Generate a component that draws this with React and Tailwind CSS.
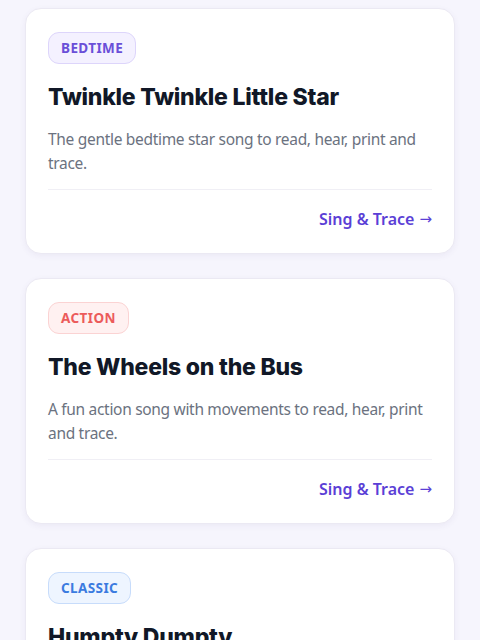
import React from "react";

const songs = [
  {
    tag: "BEDTIME",
    tagClass: "bg-[#f4f1ff] border-[#ddd5fb] text-[#6a4fd8]",
    title: "Twinkle Twinkle Little Star",
    text: "The gentle bedtime star song to read, hear, print and trace.",
  },
  {
    tag: "ACTION",
    tagClass: "bg-[#fff1f1] border-[#fbd3d3] text-[#ec5b5b]",
    title: "The Wheels on the Bus",
    text: "A fun action song with movements to read, hear, print and trace.",
  },
  {
    tag: "CLASSIC",
    tagClass: "bg-[#eef5ff] border-[#c7dcfb] text-[#3b7be0]",
    title: "Humpty Dumpty",
    text: "The classic wall-sitting rhyme to read, hear, print and trace.",
  },
];

function SongCard({ song }) {
  return (
    <div className="bg-white border border-[#ebe9f3] rounded-2xl shadow-[0_2px_6px_rgba(60,50,120,0.06)] px-[22px] pt-[23px] pb-[22px]">
      <span
        className={`inline-flex items-center h-8 px-3 rounded-[11px] border text-[13.5px] font-bold tracking-[0.03em] font-['Noto_Sans',sans-serif] ${song.tagClass}`}
      >
        {song.tag}
      </span>
      <h2 className="mt-[17px] text-[23px] leading-8 font-extrabold tracking-[-0.01em] text-[#111827] font-['Inter',sans-serif]">
        {song.title}
      </h2>
      <p className="mt-[14px] text-[15.5px] leading-[24px] tracking-[-0.02em] text-[#6b7280] font-['Noto_Sans',sans-serif]">
        {song.text}
      </p>
      <div className="mt-[14px] border-t border-[#f0eff5]" />
      <div className="flex justify-end pt-[17px]">
        <a className="flex items-center gap-[5px] text-[16px] leading-6 font-semibold text-[#5b3fd6] font-['Noto_Sans',sans-serif]">
          Sing &amp; Trace
          <span className="font-['DejaVu_Sans',sans-serif] text-[15px] font-normal">→</span>
        </a>
      </div>
    </div>
  );
}

export default function App() {
  return (
    <div className="min-h-screen bg-[#f6f5fd] px-[25px] pt-[8px] pb-8 flex flex-col gap-6">
      {songs.map((song) => (
        <SongCard key={song.tag} song={song} />
      ))}
    </div>
  );
}
